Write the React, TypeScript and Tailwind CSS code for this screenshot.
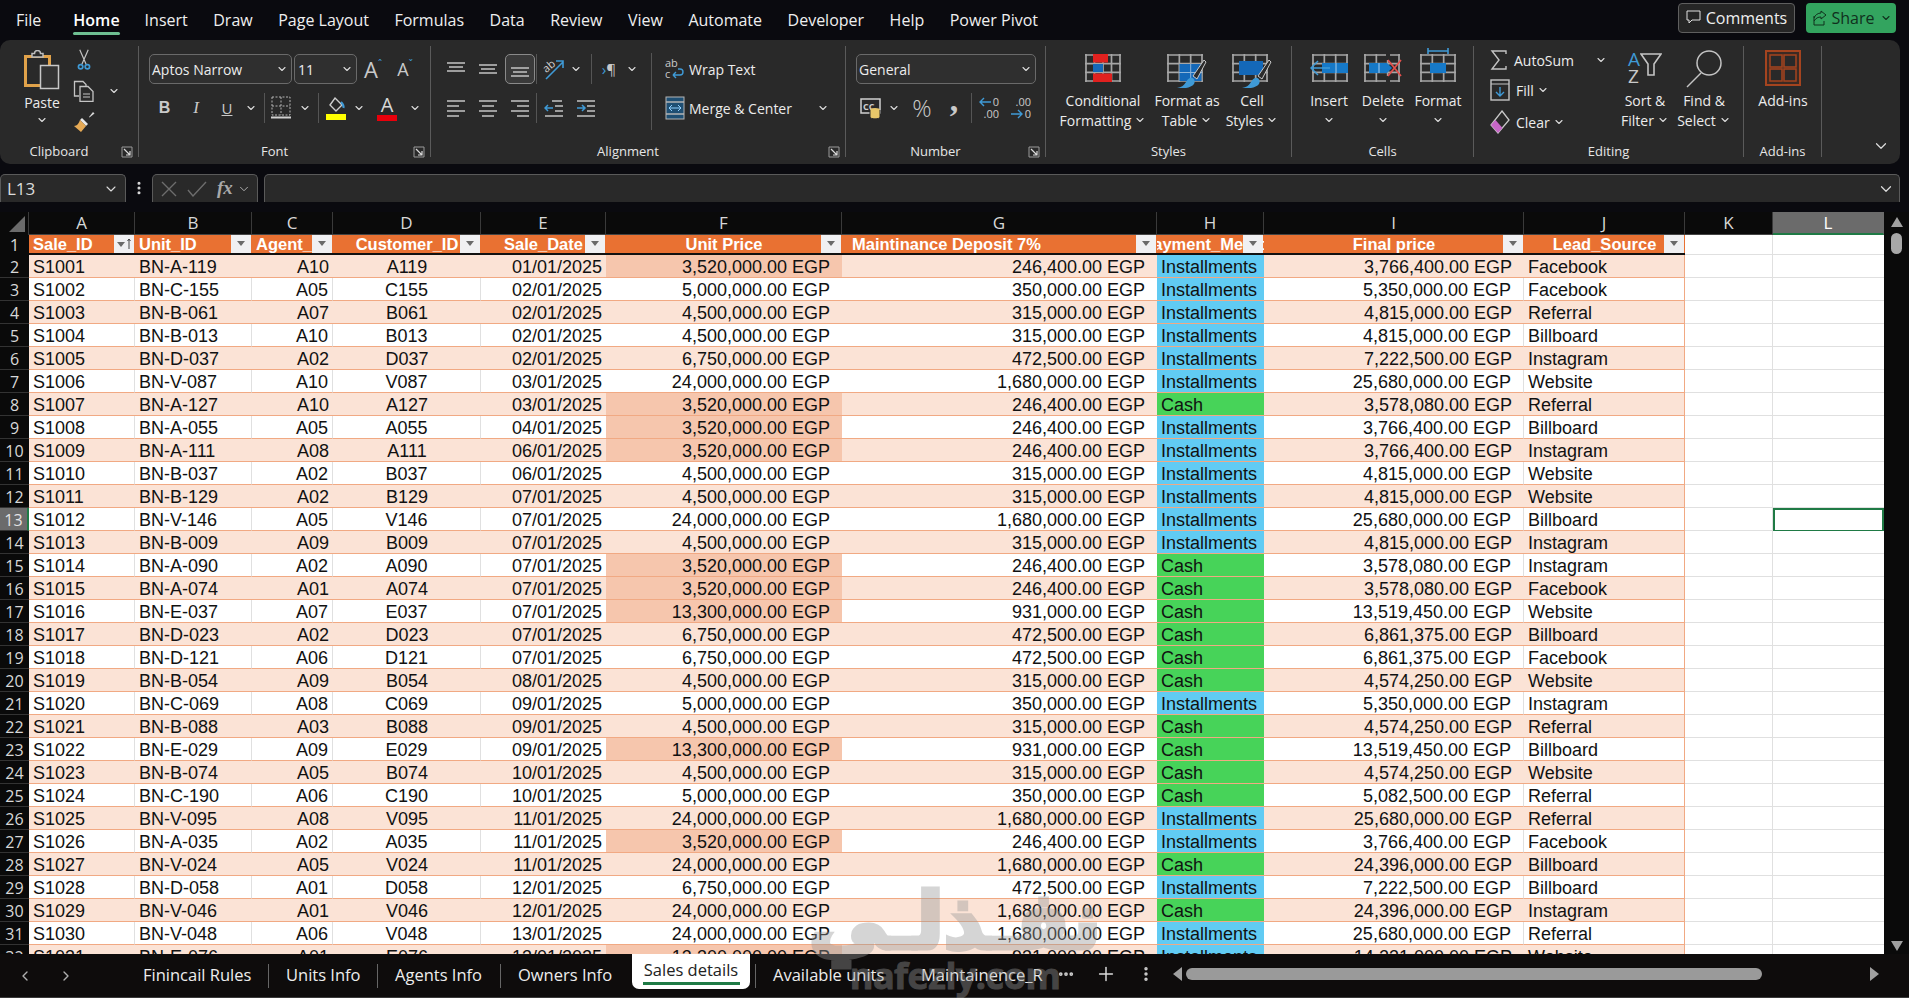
import { ChevronDown, ChevronLeft, ChevronRight, Ellipsis, EllipsisVertical, Plus } from "lucide-react";
import type { ReactNode } from "react";

const UI = "font-['Open_Sans',sans-serif]";
const GRAY = "#c4c4c4";
const BLUE = "#3f9ad6";

type Row = [string, string, string, string, string, string, string, "I" | "C", string, string];

const rows: Row[] = [
  ["S1001", "BN-A-119", "A10", "A119", "01/01/2025", "3,520,000.00", "246,400.00", "I", "3,766,400.00", "Facebook"],
  ["S1002", "BN-C-155", "A05", "C155", "02/01/2025", "5,000,000.00", "350,000.00", "I", "5,350,000.00", "Facebook"],
  ["S1003", "BN-B-061", "A07", "B061", "02/01/2025", "4,500,000.00", "315,000.00", "I", "4,815,000.00", "Referral"],
  ["S1004", "BN-B-013", "A10", "B013", "02/01/2025", "4,500,000.00", "315,000.00", "I", "4,815,000.00", "Billboard"],
  ["S1005", "BN-D-037", "A02", "D037", "02/01/2025", "6,750,000.00", "472,500.00", "I", "7,222,500.00", "Instagram"],
  ["S1006", "BN-V-087", "A10", "V087", "03/01/2025", "24,000,000.00", "1,680,000.00", "I", "25,680,000.00", "Website"],
  ["S1007", "BN-A-127", "A10", "A127", "03/01/2025", "3,520,000.00", "246,400.00", "C", "3,578,080.00", "Referral"],
  ["S1008", "BN-A-055", "A05", "A055", "04/01/2025", "3,520,000.00", "246,400.00", "I", "3,766,400.00", "Billboard"],
  ["S1009", "BN-A-111", "A08", "A111", "06/01/2025", "3,520,000.00", "246,400.00", "I", "3,766,400.00", "Instagram"],
  ["S1010", "BN-B-037", "A02", "B037", "06/01/2025", "4,500,000.00", "315,000.00", "I", "4,815,000.00", "Website"],
  ["S1011", "BN-B-129", "A02", "B129", "07/01/2025", "4,500,000.00", "315,000.00", "I", "4,815,000.00", "Website"],
  ["S1012", "BN-V-146", "A05", "V146", "07/01/2025", "24,000,000.00", "1,680,000.00", "I", "25,680,000.00", "Billboard"],
  ["S1013", "BN-B-009", "A09", "B009", "07/01/2025", "4,500,000.00", "315,000.00", "I", "4,815,000.00", "Instagram"],
  ["S1014", "BN-A-090", "A02", "A090", "07/01/2025", "3,520,000.00", "246,400.00", "C", "3,578,080.00", "Instagram"],
  ["S1015", "BN-A-074", "A01", "A074", "07/01/2025", "3,520,000.00", "246,400.00", "C", "3,578,080.00", "Facebook"],
  ["S1016", "BN-E-037", "A07", "E037", "07/01/2025", "13,300,000.00", "931,000.00", "C", "13,519,450.00", "Website"],
  ["S1017", "BN-D-023", "A02", "D023", "07/01/2025", "6,750,000.00", "472,500.00", "C", "6,861,375.00", "Billboard"],
  ["S1018", "BN-D-121", "A06", "D121", "07/01/2025", "6,750,000.00", "472,500.00", "C", "6,861,375.00", "Facebook"],
  ["S1019", "BN-B-054", "A09", "B054", "08/01/2025", "4,500,000.00", "315,000.00", "C", "4,574,250.00", "Website"],
  ["S1020", "BN-C-069", "A08", "C069", "09/01/2025", "5,000,000.00", "350,000.00", "I", "5,350,000.00", "Instagram"],
  ["S1021", "BN-B-088", "A03", "B088", "09/01/2025", "4,500,000.00", "315,000.00", "C", "4,574,250.00", "Referral"],
  ["S1022", "BN-E-029", "A09", "E029", "09/01/2025", "13,300,000.00", "931,000.00", "C", "13,519,450.00", "Billboard"],
  ["S1023", "BN-B-074", "A05", "B074", "10/01/2025", "4,500,000.00", "315,000.00", "C", "4,574,250.00", "Website"],
  ["S1024", "BN-C-190", "A06", "C190", "10/01/2025", "5,000,000.00", "350,000.00", "C", "5,082,500.00", "Referral"],
  ["S1025", "BN-V-095", "A08", "V095", "11/01/2025", "24,000,000.00", "1,680,000.00", "I", "25,680,000.00", "Referral"],
  ["S1026", "BN-A-035", "A02", "A035", "11/01/2025", "3,520,000.00", "246,400.00", "I", "3,766,400.00", "Facebook"],
  ["S1027", "BN-V-024", "A05", "V024", "11/01/2025", "24,000,000.00", "1,680,000.00", "C", "24,396,000.00", "Billboard"],
  ["S1028", "BN-D-058", "A01", "D058", "12/01/2025", "6,750,000.00", "472,500.00", "I", "7,222,500.00", "Billboard"],
  ["S1029", "BN-V-046", "A01", "V046", "12/01/2025", "24,000,000.00", "1,680,000.00", "C", "24,396,000.00", "Instagram"],
  ["S1030", "BN-V-048", "A06", "V048", "13/01/2025", "24,000,000.00", "1,680,000.00", "I", "25,680,000.00", "Referral"],
  ["S1031", "BN-E-076", "A01", "E076", "13/01/2025", "13,300,000.00", "931,000.00", "I", "14,231,000.00", "Website"],
];

const W = {
  head: "w-[29px]",
  A: "w-[106px]",
  B: "w-[117px]",
  C: "w-[81px]",
  D: "w-[148px]",
  E: "w-[125px]",
  F: "w-[236px]",
  G: "w-[315px]",
  H: "w-[107px]",
  I: "w-[260px]",
  J: "w-[161px]",
  K: "w-[88px]",
  L: "w-[111px]",
};

function Chev({ className = "" }: { className?: string }) {
  return <ChevronDown size={12} strokeWidth={2.2} className={`text-[#dcdcdc] shrink-0 ${className}`} />;
}

function Slot({ w, children }: { w: string; children: ReactNode }) {
  return <span className={`flex items-center justify-center shrink-0 h-full ${w}`}>{children}</span>;
}

function Launcher() {
  return (
    <svg width="12" height="12" viewBox="0 0 12 12" className="shrink-0">
      <path d="M1 11V1h10v10z" fill="none" stroke="#9a9a9a" />
      <path d="M3 3l6 6M9 5v4H5" fill="none" stroke="#dcdcdc" strokeWidth="1.2" />
    </svg>
  );
}

function Group({ w, label, launcher, children }: { w: string; label: string; launcher?: boolean; children: ReactNode }) {
  return (
    <section className={`flex flex-col h-[111px] border-r border-[#5a5a5a] shrink-0 ${w}`}>
      <div className="flex-1 min-h-0 flex">{children}</div>
      <div className="h-[10px] flex items-center text-[13px] text-[#e6e6e6]">
        <span className="flex-1 text-center">{label}</span>
        {launcher && (
          <span className="w-[20px] flex justify-center pr-[2px]">
            <Launcher />
          </span>
        )}
      </div>
    </section>
  );
}

function Lines({ lines, stroke = GRAY }: { lines: [number, number, number][]; stroke?: string }) {
  return (
    <svg width="20" height="20" viewBox="0 0 20 20">
      {lines.map(([x1, x2, y]) => (
        <path key={`${x1}-${y}`} d={`M${x1} ${y}H${x2}`} stroke={stroke} strokeWidth="1.5" />
      ))}
    </svg>
  );
}

function PasteIcon() {
  return (
    <svg width="36" height="40" viewBox="0 0 36 40">
      <rect x="1.5" y="6.5" width="24" height="29" fill="none" stroke="#e0a24a" strokeWidth="3" />
      <path d="M8 7V3.5h2.5a3 3 0 0 1 6 0H19V7z" fill="#292929" stroke="#bdbdbd" strokeWidth="1.5" />
      <rect x="16.5" y="15.5" width="18" height="23" fill="#333" stroke="#c8c8c8" strokeWidth="1.5" />
    </svg>
  );
}

function Scissors() {
  return (
    <svg width="16" height="22" viewBox="0 0 18 26">
      <path d="M4 1l7.5 17M14 1L6.5 18" stroke={GRAY} strokeWidth="1.4" fill="none" />
      <circle cx="5" cy="21" r="2.6" fill="none" stroke={BLUE} strokeWidth="2" />
      <circle cx="13" cy="21" r="2.6" fill="none" stroke={BLUE} strokeWidth="2" />
    </svg>
  );
}

function CopyIcon() {
  return (
    <svg width="22" height="22" viewBox="0 0 22 22">
      <path d="M6 16H1.5V1.5H10l3 3V7" fill="none" stroke={GRAY} strokeWidth="1.3" />
      <path d="M7 6.5h8l5 5v10H7z" fill="#292929" stroke={GRAY} strokeWidth="1.3" />
      <path d="M10 14h7M10 17h7" stroke={GRAY} />
    </svg>
  );
}

function Painter() {
  return (
    <svg width="22" height="22" viewBox="0 0 22 22">
      <path d="M16 6l4-5 1.5 1.5-5 4z" fill="#d8d8d8" />
      <path d="M9 7l6 6-2 2-6-6z" fill="#e8e8e8" />
      <path d="M7 9l6 6-5 6-7-6c3 0 5-3 6-6z" fill="#e6aa55" />
    </svg>
  );
}

function BordersIcon() {
  return (
    <svg width="20" height="24" viewBox="0 0 20 24">
      <rect x="1" y="1" width="18" height="18" fill="none" stroke="#b5b5b5" strokeDasharray="2 1.5" />
      <path d="M10 1v18M1 10h18" stroke="#b5b5b5" strokeDasharray="2 1.5" />
      <path d="M0 21.5h20" stroke="#d2d2d2" strokeWidth="2" />
    </svg>
  );
}

function FillIcon() {
  return (
    <svg width="22" height="24" viewBox="0 0 22 24">
      <path d="M10 2l7 7-6 6-6-6z" fill="none" stroke="#cfcfcf" strokeWidth="1.4" />
      <path d="M16 6c2 2 3 4 2.500 6" stroke={BLUE} strokeWidth="2" fill="none" />
      <rect x="1" y="18" width="20" height="6" fill="#ffff00" />
    </svg>
  );
}

function FontColor() {
  return (
    <span className="flex flex-col items-center w-[20px]">
      <span className="text-[20px] leading-[20px] text-[#d8d8d8]">A</span>
      <span className="h-[6px] w-[20px] bg-[#e8000b]" />
    </span>
  );
}

function Orientation() {
  return (
    <svg width="24" height="24" viewBox="0 0 24 24">
      <text x="1" y="13" fontSize="11" fill="#cfcfcf" transform="rotate(-40 7 10)" fontFamily="Open Sans">ab</text>
      <path d="M4 22L21 5M14 4h7v7" stroke={BLUE} strokeWidth="1.6" fill="none" />
    </svg>
  );
}

function WrapIcon() {
  return (
    <svg width="20" height="22" viewBox="0 0 20 22">
      <text x="0" y="9" fontSize="11" fill="#c9c9c9" fontFamily="Open Sans">ab</text>
      <text x="0" y="20" fontSize="11" fill="#c9c9c9" fontFamily="Open Sans">c</text>
      <path d="M8 17h7c4 0 4-6 0-6h-2M8 17l3-3M8 17l3 3" stroke={BLUE} strokeWidth="1.4" fill="none" />
    </svg>
  );
}

function MergeIcon() {
  return (
    <svg width="20" height="24" viewBox="0 0 20 24">
      <rect x="1" y="1" width="18" height="22" fill="#1f4f73" stroke="#b5b5b5" />
      <path d="M1 6h18M1 18h18" stroke="#b5b5b5" strokeWidth="1.5" />
      <path d="M4 12h12M4 12l3-3M4 12l3 3M16 12l-3-3M16 12l-3 3" stroke="#8fd0ff" fill="none" />
    </svg>
  );
}

function AccountingIcon() {
  return (
    <svg width="22" height="22" viewBox="0 0 22 22">
      <rect x="1" y="2" width="19" height="14" fill="none" stroke="#cfcfcf" strokeWidth="1.5" />
      <text x="3" y="13" fontSize="9" fontWeight="700" fill="#cfcfcf" fontFamily="Open Sans">CC</text>
      <ellipse cx="15" cy="13" rx="5" ry="2" fill="#e8c76a" />
      <path d="M10 13v7c0 2.500 10 2.500 10 0v-7" fill="#e8c76a" stroke="#292929" />
    </svg>
  );
}

function DecimalIcon({ more }: { more?: boolean }) {
  return (
    <span className="relative flex flex-col items-end w-[20px] text-[11px] leading-[12px] text-[#c9c9c9]">
      <span>{more ? ".00" : "0"}</span>
      <span>{more ? "0" : ".00"}</span>
      <svg width="12" height="10" viewBox="0 0 12 10" className={`absolute left-0 ${more ? "top-[13px]" : "top-[1px]"}`}>
        {more ? (
          <path d="M0 5h11M7 1l4 4-4 4" stroke={BLUE} strokeWidth="1.4" fill="none" />
        ) : (
          <path d="M12 5H1M5 1L1 5l4 4" stroke={BLUE} strokeWidth="1.4" fill="none" />
        )}
      </svg>
    </span>
  );
}

// 35x27 spreadsheet grid that most of the Styles and Cells icons sit on
function GridLines({ x = 3, y = 3 }: { x?: number; y?: number }) {
  const cols = Array.from({ length: x + 1 }, (_, i) => 1 + (i * 34) / x);
  const lines = Array.from({ length: y + 1 }, (_, i) => 1 + (i * 26) / y);
  return (
    <>
      {cols.map((c) => (
        <path key={`c${c}`} d={`M${c} 0v28`} stroke="#a6a6a6" strokeWidth="1.7" />
      ))}
      {lines.map((l) => (
        <path key={`l${l}`} d={`M0 ${l}h36`} stroke="#a6a6a6" strokeWidth="1.7" />
      ))}
    </>
  );
}

function CondIcon() {
  return (
    <svg width="36" height="28" viewBox="0 0 36 28" className="mt-[8px]">
      <GridLines x={4} />
      <rect x="8" y="0" width="15" height="8.500" fill="#e1211f" />
      <rect x="8" y="10" width="10" height="8" fill="#1468b8" />
      <rect x="8" y="19.500" width="19" height="8.500" fill="#e1211f" />
    </svg>
  );
}

function Brush() {
  return (
    <>
      <path d="M26 22L37 6l2 2-9 17z" fill="#2b2b2b" stroke="#c8c8c8" />
      <path d="M10 34c6 1 14 0 17-4 2-4-1-7-4-6-4 1-4 9-13 10z" fill="#3f9ad6" />
    </>
  );
}

function TableIcon() {
  return (
    <svg width="40" height="34" viewBox="0 0 40 34" className="mt-[8px]">
      <GridLines />
      <rect x="12.500" y="10" width="22" height="17" fill="#1468b8" />
      <path d="M23.700 10v17M12 18.500h23" stroke="#8fb6da" />
      <Brush />
    </svg>
  );
}

function CellStyleIcon() {
  return (
    <svg width="40" height="34" viewBox="0 0 40 34" className="mt-[8px]">
      <GridLines />
      <rect x="7" y="7" width="24" height="14" fill="#1468b8" />
      <Brush />
    </svg>
  );
}

function InsertIcon() {
  return (
    <svg width="38" height="28" viewBox="0 0 38 28" className="mt-[8px]">
      <g transform="translate(2 0)"><GridLines /></g>
      <rect x="12" y="9" width="26" height="10" fill="#1679c8" />
      <path d="M26 9v10" stroke="#a8cff0" />
      <path d="M20 14H1M8 7l-7 7 7 7" stroke={BLUE} strokeWidth="1.5" fill="none" />
    </svg>
  );
}

function DeleteIcon() {
  return (
    <svg width="38" height="28" viewBox="0 0 38 28" className="mt-[8px]">
      <GridLines />
      <path d="M24 0v6M24 22v6" stroke="#292929" strokeWidth="4" />
      <path d="M5 9h18l5 5-5 5H5z" fill="#1679c8" />
      <path d="M15 9v10" stroke="#a8cff0" />
      <path d="M24 6l13 16M37 6L24 22" stroke="#e4504c" strokeWidth="1.7" />
    </svg>
  );
}

function FormatIcon() {
  return (
    <svg width="36" height="34" viewBox="0 0 36 34" className="mt-[2px]">
      <path d="M8 3h20M8 0v6M28 0v6" stroke={BLUE} strokeWidth="1.6" />
      <g transform="translate(0 6)">
        <GridLines />
        <rect x="10" y="9" width="16" height="10" fill="#1679c8" />
      </g>
    </svg>
  );
}

function SortIcon() {
  return (
    <span className="flex items-center h-[36px] mt-[4px]">
      <span className="flex flex-col text-[19px] leading-[17px]">
        <span className="text-[#3f9ad6]">A</span>
        <span className="text-[#c9c9c9]">Z</span>
      </span>
      <svg width="22" height="26" viewBox="0 0 22 26" className="-mt-[6px]">
        <path d="M1 2h20l-7 10v11h-6V12z" fill="none" stroke={GRAY} strokeWidth="1.6" />
      </svg>
    </span>
  );
}

function FindIcon() {
  return (
    <svg width="38" height="38" viewBox="0 0 38 38" className="mt-[4px]">
      <circle cx="24" cy="13" r="12" fill="none" stroke={GRAY} strokeWidth="1.5" />
      <path d="M16 23L2 37" stroke={GRAY} strokeWidth="1.5" />
    </svg>
  );
}

function AddinsIcon() {
  return (
    <svg width="36" height="36" viewBox="0 0 36 36" className="mt-[4px]">
      <rect x="1" y="1" width="34" height="34" fill="#3c2a23" stroke="#a5441f" strokeWidth="2" />
      <rect x="5" y="5" width="12" height="12" fill="#292929" stroke="#a5441f" strokeWidth="1.5" />
      <rect x="19" y="5" width="12" height="12" fill="#292929" stroke="#a5441f" strokeWidth="1.5" />
      <rect x="5" y="19" width="12" height="12" fill="#292929" stroke="#a5441f" strokeWidth="1.5" />
      <rect x="19" y="19" width="12" height="12" fill="#292929" stroke="#a5441f" strokeWidth="1.5" />
    </svg>
  );
}

function FillDown() {
  return (
    <svg width="20" height="22" viewBox="0 0 20 22">
      <rect x="1" y="1" width="18" height="20" fill="none" stroke={GRAY} strokeWidth="1.4" />
      <path d="M1 5h18" stroke={GRAY} />
      <path d="M10 8v9M6 13l4 4 4-4" stroke={BLUE} strokeWidth="1.4" fill="none" />
    </svg>
  );
}

function Eraser() {
  return (
    <svg width="20" height="24" viewBox="0 0 20 24">
      <path d="M12 1l7 9-11 13-7-8z" fill="none" stroke="#c9c9c9" strokeWidth="1.3" />
      <path d="M5.500 10l7 8-4.500 5-7-8z" fill="#c767c7" />
    </svg>
  );
}

function BigButton({ w, icon, lines, pl = "" }: { w: string; icon: ReactNode; lines: ReactNode[]; pl?: string }) {
  return (
    <div className={`flex flex-col items-center shrink-0 ${w} ${pl}`}>
      <div className="h-[36px] flex items-start justify-center shrink-0">{icon}</div>
      <div className="h-[8px] shrink-0" />
      {lines.map((l, i) => (
        <div key={i} className="h-[20px] flex items-center whitespace-nowrap text-[14px] text-[#ececec] gap-[3px]">
          {l}
        </div>
      ))}
    </div>
  );
}

const tabs = ["Insert", "Draw", "Page Layout", "Formulas", "Data", "Review", "View", "Automate", "Developer", "Help", "Power Pivot"];

function TabBar() {
  return (
    <header className="h-[40px] flex items-center pl-[16px] pr-[13px] text-[16px] text-[#efefef]">
      <span className="mr-[32px]">File</span>
      <span className="relative mr-[25px] font-semibold text-white">
        Home
        <span className="absolute left-0 right-0 top-[24px] h-[3px] rounded bg-[#6fbf92]" />
      </span>
      <nav className="flex gap-[25.500px]">
        {tabs.map((t) => (
          <span key={t}>{t}</span>
        ))}
      </nav>
      <div className="ml-auto flex items-center gap-[11px] -mt-[5px]">
        <button className="h-[30px] w-[117px] rounded-[4px] border border-[#5f5f5f] bg-[#262626] flex items-center justify-center gap-[5px] text-[16px]">
          <svg width="15" height="15" viewBox="0 0 15 15">
            <path d="M1 1h13v9H6l-3 3v-3H1z" fill="none" stroke="#e0e0e0" />
          </svg>
          Comments
        </button>
        <button className="h-[30px] w-[90px] rounded-[4px] bg-[#33a45f] text-[#10301d] flex items-center justify-center gap-[5px] text-[16px]">
          <svg width="16" height="16" viewBox="0 0 16 16">
            <path d="M3 6v9h10v-4M3 8c1-3 4-5 7-5V1l5 4-5 4V7c-3 0-5 1-7 4" fill="none" stroke="#10301d" />
          </svg>
          Share
          <Chev className="!text-[#10301d]" />
        </button>
      </div>
    </header>
  );
}

function Ribbon() {
  return (
    <div className={`h-[124px] w-[1900px] rounded-[10px] bg-[#292929] flex pt-[6px] text-[#ececec] ${UI}`}>
      <Group w="w-[139px]" label="Clipboard" launcher>
        <div className="w-[84px] flex flex-col items-center pt-[4px] shrink-0">
          <PasteIcon />
          <span className="mt-[3px] text-[14px] leading-[20px]">Paste</span>
          <Chev className="mt-[1px]" />
        </div>
        <div className="flex flex-col items-center pt-[3px] w-[8px] shrink-0 gap-[9px] ml-[-4px]">
          <div className="shrink-0"><Scissors /></div>
          <div className="shrink-0"><CopyIcon /></div>
          <div className="shrink-0"><Painter /></div>
        </div>
        <div className="ml-[20px] mt-[39px]"><Chev /></div>
      </Group>

      <Group w="w-[292px]" label="Font" launcher>
        <div className="pl-[10px] pt-[8px] flex flex-col">
          <div className="flex h-[30px] text-[14px]">
            <span className="w-[143px] rounded-[5px] border border-[#6a6a6a] bg-[#2f2f2f] flex items-center justify-between pl-[2px] pr-[3px]">
              Aptos Narrow <Chev />
            </span>
            <span className="ml-[2px] w-[63px] rounded-[5px] border border-[#6a6a6a] bg-[#2f2f2f] flex items-center justify-between pl-[3px] pr-[3px]">
              11 <Chev />
            </span>
            <Slot w="w-[32px]">
              <span className="text-[22px] text-[#c9c9c9]">A</span>
              <span className="text-[#3f9ad6] text-[10px] -mt-[10px]">ˆ</span>
            </Slot>
            <Slot w="w-[32px]">
              <span className="text-[18px] text-[#c9c9c9]">A</span>
              <span className="text-[#3f9ad6] text-[10px] -mt-[10px]">ˇ</span>
            </Slot>
          </div>
          <div className="flex h-[30px] mt-[9px] items-center">
            <Slot w="w-[31px]"><span className="font-['Liberation_Sans',sans-serif] font-bold text-[#c9c9c9] text-[16px]">B</span></Slot>
            <Slot w="w-[32px]"><span className="font-['Liberation_Serif',serif] italic text-[#c9c9c9] text-[17px]">I</span></Slot>
            <Slot w="w-[30px]"><span className="underline text-[#c9c9c9] text-[15px]">U</span></Slot>
            <Slot w="w-[18px]"><Chev /></Slot>
            <span className="ml-[4px] w-px h-[30px] bg-[#555]" />
            <Slot w="w-[32px]"><BordersIcon /></Slot>
            <Slot w="w-[16px]"><Chev /></Slot>
            <span className="ml-[5px] w-px h-[30px] bg-[#555]" />
            <Slot w="w-[34px]"><FillIcon /></Slot>
            <Slot w="w-[12px]"><Chev /></Slot>
            <Slot w="w-[44px]"><FontColor /></Slot>
            <Slot w="w-[12px]"><Chev /></Slot>
          </div>
        </div>
      </Group>

      <Group w="w-[415px]" label="Alignment" launcher>
        <div className="pl-[9px] pt-[8px] flex flex-col w-[220px] shrink-0">
          <div className="flex h-[30px] items-center">
            <Slot w="w-[32px]"><Lines lines={[[1, 19, 4], [3, 17, 8], [1, 19, 12]]} /></Slot>
            <Slot w="w-[32px]"><Lines lines={[[1, 19, 6], [3, 17, 10], [1, 19, 14]]} /></Slot>
            <span className="ml-px w-[30px] h-[30px] rounded-[5px] border border-[#8a8a8a] bg-[#3a3a3a] flex items-center justify-center">
              <Lines lines={[[1, 19, 9], [3, 17, 13], [1, 19, 17]]} />
            </span>
            <span className="ml-px w-px h-[30px] bg-[#555]" />
            <Slot w="w-[34px]"><Orientation /></Slot>
            <Slot w="w-[10px]"><Chev /></Slot>
            <span className="ml-[10px] w-px h-[30px] bg-[#555]" />
            <Slot w="w-[34px]"><span className="text-[15px] text-[#c9c9c9]"><span className="text-[#3f9ad6]">›</span>¶</span></Slot>
            <Slot w="w-[12px]"><Chev /></Slot>
          </div>
          <div className="flex h-[30px] mt-[9px] items-center">
            <Slot w="w-[32px]"><Lines lines={[[1, 19, 3], [1, 13, 8], [1, 19, 13], [1, 13, 18]]} /></Slot>
            <Slot w="w-[32px]"><Lines lines={[[1, 19, 3], [4, 16, 8], [1, 19, 13], [4, 16, 18]]} /></Slot>
            <Slot w="w-[32px]"><Lines lines={[[1, 19, 3], [7, 19, 8], [1, 19, 13], [7, 19, 18]]} /></Slot>
            <span className="w-px h-[30px] bg-[#555]" />
            <Slot w="w-[34px]">
              <svg width="20" height="20" viewBox="0 0 20 20">
                <path d="M8 3h10M11 8h8M11 13h8M1 18h18" stroke={GRAY} strokeWidth="1.5" />
                <path d="M9 10H1M4 7l-3 3 3 3" stroke={BLUE} strokeWidth="1.5" fill="none" />
              </svg>
            </Slot>
            <Slot w="w-[30px]">
              <svg width="20" height="20" viewBox="0 0 20 20">
                <path d="M1 3h18M11 8h8M11 13h8M1 18h18" stroke={GRAY} strokeWidth="1.5" />
                <path d="M1 10h8M6 7l3 3-3 3" stroke={BLUE} strokeWidth="1.5" fill="none" />
              </svg>
            </Slot>
          </div>
        </div>
        <div className="mt-[7px] h-[77px] border-l border-[#555] pl-[13px] pr-[16px] flex flex-col w-[194px] shrink-0 text-[14px]">
          <div className="flex h-[30px] items-center gap-[4px] mt-[1px] whitespace-nowrap"><WrapIcon /> Wrap Text</div>
          <div className="flex h-[30px] mt-[9px] items-center gap-[4px] whitespace-nowrap">
            <MergeIcon /> Merge &amp; Center <Chev className="ml-auto" />
          </div>
        </div>
      </Group>

      <Group w="w-[200px]" label="Number" launcher>
        <div className="pl-[10px] pt-[8px] flex flex-col">
          <span className="w-[180px] h-[30px] rounded-[5px] border border-[#6a6a6a] bg-[#2f2f2f] flex items-center justify-between pl-[2px] pr-[3px] text-[14px]">
            General <Chev />
          </span>
          <div className="flex h-[30px] mt-[9px] items-center">
            <Slot w="w-[30px]"><AccountingIcon /></Slot>
            <Slot w="w-[16px]"><Chev /></Slot>
            <Slot w="w-[40px]"><span className="text-[24px] font-light text-[#c9c9c9]">%</span></Slot>
            <Slot w="w-[24px]"><span className="font-['Liberation_Serif',serif] text-[34px] leading-[20px] -mt-[16px] font-bold text-[#c9c9c9]">,</span></Slot>
            <span className="ml-[5px] w-px h-[30px] bg-[#555]" />
            <Slot w="w-[34px]"><DecimalIcon /></Slot>
            <Slot w="w-[30px]"><DecimalIcon more /></Slot>
          </div>
        </div>
      </Group>

      <Group w="w-[246px]" label="Styles">
        <BigButton
          w="w-[107px]"
          pl="pl-[7px]"
          icon={<CondIcon />}
          lines={["Conditional", <>Formatting <Chev /></>]}
        />
        <BigButton w="w-[68px]" icon={<TableIcon />} lines={["Format as", <>Table <Chev /></>]} />
        <BigButton w="w-[62px]" icon={<CellStyleIcon />} lines={["Cell", <>Styles <Chev /></>]} />
      </Group>

      <Group w="w-[182px]" label="Cells">
        <div className="w-[10px] shrink-0" />
        <BigButton w="w-[54px]" icon={<InsertIcon />} lines={["Insert", <Chev />]} />
        <BigButton w="w-[54px]" icon={<DeleteIcon />} lines={["Delete", <Chev />]} />
        <BigButton w="w-[56px]" icon={<FormatIcon />} lines={["Format", <Chev />]} />
      </Group>

      <Group w="w-[270px]" label="Editing">
        <div className="w-[140px] shrink-0 pl-[16px] flex flex-col text-[14px]">
          <div className="h-[28px] flex items-center gap-[6px]">
            <svg width="18" height="20" viewBox="0 0 18 20">
              <path d="M16 4V1H2l7 9-7 9h14v-3" fill="none" stroke={GRAY} strokeWidth="1.4" />
            </svg>
            AutoSum
            <Chev className="ml-[15px]" />
          </div>
          <div className="h-[32px] flex items-center gap-[6px]"><FillDown /> Fill <Chev className="-ml-[3px]" /></div>
          <div className="h-[32px] flex items-center gap-[6px]"><Eraser /> Clear <Chev className="-ml-[3px]" /></div>
        </div>
        <BigButton w="w-[62px]" icon={<SortIcon />} lines={["Sort &", <>Filter <Chev /></>]} />
        <BigButton w="w-[56px]" icon={<FindIcon />} lines={["Find &", <>Select <Chev /></>]} />
      </Group>

      <Group w="w-[78px]" label="Add-ins">
        <BigButton w="w-[78px]" icon={<AddinsIcon />} lines={["Add-ins"]} />
      </Group>

      <div className="flex-1 flex items-end justify-end pb-[9px] pr-[10px]">
        <ChevronDown size={18} strokeWidth={1.6} className="text-[#dcdcdc]" />
      </div>
    </div>
  );
}

function FormulaBar() {
  return (
    <div className={`h-[28px] mt-[10px] flex items-stretch text-[#dcdcdc] ${UI}`}>
      <div className="w-[126px] rounded-t-[5px] border border-b-0 border-[#5a5a5a] bg-[#292929] flex items-center justify-between pl-[6px] pr-[6px] text-[17px]">
        L13 <ChevronDown size={16} strokeWidth={1.6} />
      </div>
      <div className="w-[26px] flex items-center justify-center">
        <EllipsisVertical size={16} strokeWidth={2.6} />
      </div>
      <div className="w-[106px] rounded-t-[5px] border border-b-0 border-[#5a5a5a] bg-[#292929] flex items-center pl-[8px] gap-[10px] text-[#6d6d6d]">
        <svg width="16" height="16" viewBox="0 0 16 16"><path d="M1 1l14 14M15 1L1 15" stroke="#6d6d6d" strokeWidth="1.4" /></svg>
        <svg width="20" height="16" viewBox="0 0 20 16"><path d="M1 9l5 6L19 1" fill="none" stroke="#6d6d6d" strokeWidth="1.4" /></svg>
        <span className="font-['Liberation_Serif',serif] italic font-bold text-[19px] text-[#a8a8a8] whitespace-nowrap">fx</span>
        <ChevronDown size={14} strokeWidth={1.6} className="text-[#b5b5b5] -ml-[6px] shrink-0" />
      </div>
      <div className="ml-[6px] w-[1636px] rounded-t-[5px] border border-b-0 border-[#5a5a5a] bg-[#292929] flex items-center justify-end pr-[4px]">
        <ChevronDown size={18} strokeWidth={1.6} />
      </div>
    </div>
  );
}

function Filter({ sorted }: { sorted?: boolean }) {
  return (
    <span className="absolute right-[1px] top-[0px] h-[18px] w-[20px] bg-[#f0f0f2] flex items-center justify-center">
      <svg width="18" height="14" viewBox="0 0 18 14">
        <path d={sorted ? "M2 5h8l-4 5z" : "M5 4h8l-4 5z"} fill="#6a6a6a" />
        {sorted && <path d="M14 12V2M12.500 4L14 2l1.500 2" stroke="#444" fill="none" />}
      </svg>
    </span>
  );
}

function ColHead({ w, label, active }: { w: string; label: string; active?: boolean }) {
  return (
    <div
      className={`h-[23px] shrink-0 flex items-center justify-center border-r text-[17px] ${w} ${
        active ? "bg-[#6b6b6b] border-[#6b6b6b] border-b-2 border-b-[#1f7a45] text-white" : "border-[#3a3a3a] border-b border-b-[#444] text-[#d8d8d8]"
      }`}
    >
      {label}
    </div>
  );
}

function HeaderCell({ w, label, align = "justify-center", sorted }: { w: string; label: string; align?: string; sorted?: boolean }) {
  return (
    <div className={`relative h-[20px] shrink-0 flex items-start overflow-hidden whitespace-nowrap bg-[#e97132] border-b-2 border-b-[#111] px-[4px] text-white font-bold text-[16.500px] leading-[18px] ${align} ${w}`}>
      {label}
      <Filter sorted={sorted} />
    </div>
  );
}

function Cell({ w, children, cls = "" }: { w: string; children?: ReactNode; cls?: string }) {
  return <div className={`h-[23px] shrink-0 leading-[25px] whitespace-nowrap overflow-hidden ${w} ${cls}`}>{children}</div>;
}

function SheetGrid() {
  return (
    <div className="flex w-[1909px] h-[742px] mt-[10px]">
      <div className="w-[1884px] overflow-hidden bg-white font-['Liberation_Sans',Arial,sans-serif] text-[18px] text-[#111]">
        <div className={`flex bg-[#0a0a0a] ${UI}`}>
          <div className={`h-[23px] shrink-0 bg-[#0a0a0a] border-r border-[#3a3a3a] flex items-end justify-end p-[3px] ${W.head}`}>
            <svg width="16" height="16" viewBox="0 0 16 16"><path d="M16 0v16H0z" fill="#6b6b6b" /></svg>
          </div>
          <ColHead w={W.A} label="A" />
          <ColHead w={W.B} label="B" />
          <ColHead w={W.C} label="C" />
          <ColHead w={W.D} label="D" />
          <ColHead w={W.E} label="E" />
          <ColHead w={W.F} label="F" />
          <ColHead w={W.G} label="G" />
          <ColHead w={W.H} label="H" />
          <ColHead w={W.I} label="I" />
          <ColHead w={W.J} label="J" />
          <ColHead w={W.K} label="K" />
          <ColHead w={W.L} label="L" active />
        </div>

        <div className="flex h-[20px]">
          <div className={`h-[20px] shrink-0 bg-[#0a0a0a] text-[#d8d8d8] text-[17px] leading-[19px] text-center ${UI} ${W.head}`}>1</div>
          <HeaderCell w={W.A} label="Sale_ID" align="justify-start" sorted />
          <HeaderCell w={W.B} label="Unit_ID" align="justify-start" />
          <HeaderCell w={W.C} label="Agent_ID" align="justify-start" />
          <HeaderCell w={W.D} label="Customer_ID" />
          <HeaderCell w={W.E} label="Sale_Date" />
          <HeaderCell w={W.F} label="Unit Price" />
          <HeaderCell w={W.G} label="Maintinance Deposit 7%" align="justify-start pl-[10px]" />
          <HeaderCell w={W.H} label="Payment_Method" />
          <HeaderCell w={W.I} label="Final price" />
          <HeaderCell w={W.J} label="Lead_Source" />
          <div className={`h-[20px] shrink-0 border-r border-b border-[#e0e0e0] ${W.K}`} />
          <div className={`h-[20px] shrink-0 border-b border-[#e0e0e0] ${W.L}`} />
        </div>

        {rows.map((r, i) => {
          const num = i + 2;
          const band = i % 2 === 0;
          const dark = r[5].startsWith("3,520") || r[5].startsWith("13,300");
          const line = "border-b border-b-[#f1a983]";
          const bg = band ? "bg-[#fbe3d6]" : "bg-white";
          const sep = band ? "" : "border-r border-r-[#e0e0e0]";
          return (
            <div key={r[0]} className="flex">
              <Cell
                w={W.head}
                cls={`text-center text-[16px] border-b border-b-[#333] ${UI} ${
                  num === 13 ? "bg-[#6b6b6b] text-[#e4e4e4] border-r-2 border-r-[#1f7a45]" : "bg-[#0a0a0a] text-[#d8d8d8]"
                }`}
              >
                {num}
              </Cell>
              <Cell w={W.A} cls={`pl-[4px] ${bg} ${line} ${sep}`}>{r[0]}</Cell>
              <Cell w={W.B} cls={`pl-[4px] ${bg} ${line} ${sep}`}>{r[1]}</Cell>
              <Cell w={W.C} cls={`pr-[4px] text-right ${bg} ${line} ${sep}`}>{r[2]}</Cell>
              <Cell w={W.D} cls={`text-center ${bg} ${line} ${sep}`}>{r[3]}</Cell>
              <Cell w={W.E} cls={`pr-[4px] text-right ${bg} ${line}`}>{r[4]}</Cell>
              <Cell w={W.F} cls={`pr-[12px] text-right ${dark ? "bg-[#f6c6ad]" : bg} ${line}`}>{r[5]} EGP</Cell>
              <Cell w={W.G} cls={`pr-[12px] text-right ${bg} ${line}`}>{r[6]} EGP</Cell>
              <Cell w={W.H} cls={`pl-[4px] ${r[7] === "I" ? "bg-[#61cbf3]" : "bg-[#47d359]"} ${line}`}>
                {r[7] === "I" ? "Installments" : "Cash"}
              </Cell>
              <Cell w={W.I} cls={`pr-[12px] text-right ${bg} ${line} ${sep}`}>{r[8]} EGP</Cell>
              <Cell w={W.J} cls={`pl-[4px] border-r border-r-[#f1a983] ${bg} ${line}`}>{r[9]}</Cell>
              <Cell w={W.K} cls="border-b border-b-[#e0e0e0] border-r border-r-[#e0e0e0]" />
              <Cell w={W.L} cls={`border-b ${num === 13 ? "border-2 border-[#1f7a45]" : "border-b-[#e0e0e0]"}`} />
            </div>
          );
        })}
      </div>

      <aside className="w-[25px] bg-[#0a0a0a] flex flex-col items-center">
        <svg width="12" height="10" viewBox="0 0 12 10" className="mt-[5px]"><path d="M6 0l6 10H0z" fill="#a0a0a0" /></svg>
        <div className="mt-[6px] h-[21px] w-[11px] rounded-full bg-[#a8a8a8]" />
        <svg width="12" height="10" viewBox="0 0 12 10" className="mt-auto mb-[3px]"><path d="M6 10L12 0H0z" fill="#a0a0a0" /></svg>
      </aside>
    </div>
  );
}

function SheetTab({ label, ml }: { label: string; ml: string }) {
  return <span className={`whitespace-nowrap ${ml}`}>{label}</span>;
}

function SheetBar() {
  return (
    <footer className={`h-[44px] bg-[#0e0c0c] border-b border-[#3a3a3a] flex items-start text-[16.500px] text-[#ededed] ${UI}`}>
      <div className="flex items-center h-[43px] w-[143px] shrink-0 pl-[17px] gap-[25px] text-[#b0b0b0]">
        <ChevronLeft size={16} />
        <ChevronRight size={16} />
      </div>
      <div className="flex items-center h-[43px]">
        <SheetTab label="Finincail Rules" ml="w-[125px]" />
        <span className="w-px h-[24px] bg-[#666]" />
        <SheetTab label="Units Info" ml="ml-[17px] w-[91px]" />
        <span className="w-px h-[24px] bg-[#666]" />
        <SheetTab label="Agents Info" ml="ml-[17px] w-[105px]" />
        <span className="w-px h-[24px] bg-[#666]" />
        <SheetTab label="Owners Info" ml="ml-[17px] w-[114px]" />
      </div>
      <div className="w-[118px] h-[35px] shrink-0 rounded-b-[7px] bg-white text-[#222] flex flex-col items-center pt-[5px] text-[16.500px] leading-[22px]">
        <span>Sales details</span>
        <span className="h-[3px] w-[97px] bg-[#1f7a45] mt-[1px]" />
      </div>
      <div className="flex items-center h-[43px]">
        <span className="ml-[5px] w-px h-[24px] bg-[#666]" />
        <SheetTab label="Available units" ml="ml-[17px] w-[148px]" />
        <SheetTab label="Maintainence_R" ml="w-[130px] overflow-hidden" />
        <Ellipsis size={18} strokeWidth={3} className="ml-[6px] -mt-[4px] text-[#cfcfcf]" />
        <Plus size={22} strokeWidth={1.6} className="ml-[20px] -mt-[4px] text-[#dcdcdc]" />
        <EllipsisVertical size={18} strokeWidth={2.6} className="ml-[20px] -mt-[4px] text-[#cfcfcf]" />
      </div>
      <div className="flex items-center h-[43px] ml-[18px] w-[710px] -mt-[2px]">
        <svg width="9" height="14" viewBox="0 0 9 14"><path d="M0 7l9-7v14z" fill="#a0a0a0" /></svg>
        <span className="ml-[4px] h-[12px] w-[576px] rounded-full bg-[#9a9a9a]" />
        <svg width="9" height="14" viewBox="0 0 9 14" className="ml-[108px]"><path d="M9 7L0 0v14z" fill="#a0a0a0" /></svg>
      </div>
    </footer>
  );
}

export default function App() {
  return (
    <div className={`relative w-[1909px] h-[998px] overflow-hidden bg-[#0a0a0f] ${UI}`}>
      <TabBar />
      <Ribbon />
      <FormulaBar />
      <SheetGrid />
      <SheetBar />
      {/* site watermark over the sheet */}
      <div className="absolute left-[840px] top-[871px] w-[230px] flex flex-col items-center text-[#999999] opacity-40 pointer-events-none">
        <span dir="rtl" className="font-['DejaVu_Sans',sans-serif] font-bold text-[78px] leading-[100px] whitespace-nowrap [-webkit-text-stroke:5px_#999999]">نفـذلـي</span>
        <span className="font-['Open_Sans',sans-serif] font-bold text-[36px] leading-[40px] -mt-[15px] tracking-[-0.5px] whitespace-nowrap [-webkit-text-stroke:1px_#999999]">nafezly.com</span>
      </div>
    </div>
  );
}
